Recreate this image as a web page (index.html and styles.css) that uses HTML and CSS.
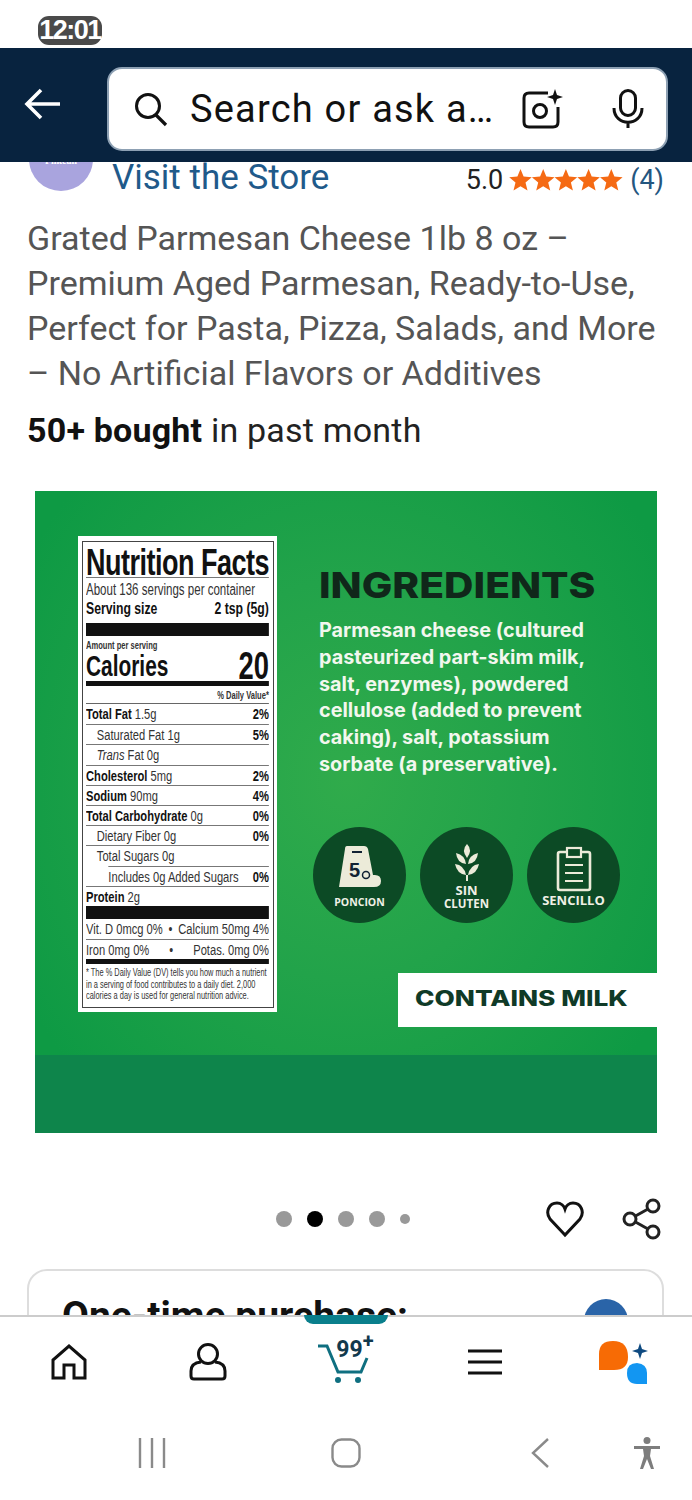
FILE: index.html
```html
<!DOCTYPE html>
<html lang="en">
<head>
    <meta charset="UTF-8">
    <meta name="viewport" content="width=device-width, initial-scale=1.0">
    <title>Grated Parmesan Cheese</title>
    <link rel="stylesheet" href="styles.css">
</head>
<body>
    <div class="status-bar"><span class="time-chip">12:01</span></div>

    <header class="search-header">
        <svg class="back-arrow" width="40" height="34" viewBox="0 0 40 34"><path d="M4 17H37M18 3L4 17L18 31" fill="none" stroke="#fff" stroke-width="3.6"/></svg>
        <div class="search-box">
            <svg class="search-icon" width="36" height="38" viewBox="0 0 36 38"><circle cx="15" cy="16" r="11.5" fill="none" stroke="#111" stroke-width="3"/><path d="M23 25L33 35" stroke="#111" stroke-width="3.2"/></svg>
            <span class="search-text">Search or ask a…</span>
            <svg class="lens-icon" width="42" height="40" viewBox="0 0 42 40"><path d="M26 4H7Q2 4 2 9V33Q2 38 7 38H31Q36 38 36 33V18" fill="none" stroke="#111" stroke-width="3"/><circle cx="18" cy="22" r="6.5" fill="none" stroke="#111" stroke-width="3"/><path d="M33 0L35 6L41 8L35 10L33 16L31 10L25 8L31 6Z" fill="#111"/></svg>
            <svg class="mic-icon" width="32" height="40" viewBox="0 0 32 40"><rect x="8.5" y="1.5" width="15" height="25" rx="7.5" fill="none" stroke="#111" stroke-width="3"/><path d="M2 19C2 38 30 38 30 19M16 32V39" fill="none" stroke="#111" stroke-width="3"/></svg>
        </div>
    </header>

    <main class="content">
        <div class="store-row">
            <div class="store-avatar"><span>Filkeali</span></div>
            <a class="store-link">Visit the Store</a>
            <div class="rating">
                <span class="rating-num">5.0</span>
                <svg width="114" height="22" viewBox="0 0 114 22" fill="#f56a14">
                    <path id="star" d="M11.5 0L14.6 7.6L22.8 8.2L16.5 13.5L18.5 21.5L11.5 17.2L4.5 21.5L6.5 13.5L0.2 8.2L8.4 7.6Z"/>
                    <use href="#star" x="22.7"/><use href="#star" x="45.4"/><use href="#star" x="68.1"/><use href="#star" x="90.8"/>
                </svg>
                <span class="rating-count">(4)</span>
            </div>
        </div>

        <h1 class="product-title">Grated Parmesan Cheese 1lb 8 oz –<br>Premium Aged Parmesan, Ready-to-Use,<br>Perfect for Pasta, Pizza, Salads, and More<br>– No Artificial Flavors or Additives</h1>
        <p class="bought"><b>50+ bought</b> in past month</p>

        <section class="product-image">
            <div class="image-top">
                <div class="nf-label">
                    <div class="nf-border">
                        <div class="nf-inner">
                            <div class="nf-title">Nutrition Facts</div>
                            <div class="nf-servings">About 136 servings per container</div>
                            <div class="nf-serving-size"><span>Serving size</span><span>2 tsp (5g)</span></div>
                            <div class="nf-bar nf-bar-thick"></div>
                            <div class="nf-amount">Amount per serving</div>
                            <div class="nf-calories"><span>Calories</span><span class="nf-cal-num">20</span></div>
                            <div class="nf-bar nf-bar-mid"></div>
                            <div class="nf-dv">% Daily Value*</div>
                            <div class="nf-row"><span><b>Total Fat</b> 1.5g</span><b>2%</b></div>
                            <div class="nf-row nf-indent"><span>Saturated Fat 1g</span><b>5%</b></div>
                            <div class="nf-row nf-indent"><span><i>Trans</i> Fat 0g</span></div>
                            <div class="nf-row"><span><b>Cholesterol</b> 5mg</span><b>2%</b></div>
                            <div class="nf-row"><span><b>Sodium</b> 90mg</span><b>4%</b></div>
                            <div class="nf-row"><span><b>Total Carbohydrate</b> 0g</span><b>0%</b></div>
                            <div class="nf-row nf-indent"><span>Dietary Fiber 0g</span><b>0%</b></div>
                            <div class="nf-row nf-indent"><span>Total Sugars 0g</span></div>
                            <div class="nf-row nf-indent-2"><span>Includes 0g Added Sugars</span><b>0%</b></div>
                            <div class="nf-row"><span><b>Protein</b> 2g</span></div>
                            <div class="nf-bar nf-bar-thick nf-bar-protein"></div>
                            <div class="nf-row nf-plain"><span>Vit. D 0mcg 0%</span><span>•</span><span>Calcium 50mg 4%</span></div>
                            <div class="nf-row"><span>Iron 0mg 0%</span><span class="nf-dot">•</span><span>Potas. 0mg 0%</span></div>
                            <div class="nf-bar nf-bar-mid"></div>
                            <div class="nf-foot">* The % Daily Value (DV) tells you how much a nutrient<br>in a serving of food contributes to a daily diet. 2,000<br>calories a day is used for general nutrition advice.</div>
                        </div>
                    </div>
                </div>

                <div class="image-right">
                    <h2 class="ingredients-title"><span>INGREDIENTS</span></h2>
                    <p class="ingredients-text">Parmesan cheese (cultured<br>pasteurized part-skim milk,<br>salt, enzymes), powdered<br>cellulose (added to prevent<br>caking), salt, potassium<br>sorbate (a preservative).</p>
                    <div class="badges">
                        <div class="badge">
                            <svg width="44" height="44" viewBox="0 0 44 44"><path d="M9 1H26Q29 1 30 4L35 30Q43 29 43 36Q43 42 36 42H1L7 4Q7 1 9 1Z" fill="#ecebd9"/><path d="M14 7H24" stroke="#123" stroke-width="2"/><text x="11" y="32" class="badge-five">5</text><circle cx="28" cy="30" r="3.5" fill="none" stroke="#123" stroke-width="1.5"/></svg>
                            <span class="badge-label badge-poncion">PONCION</span>
                        </div>
                        <div class="badge">
                            <svg width="26" height="38" viewBox="0 0 26 38" fill="#ecebd9"><path d="M13 0Q19 6 13 14Q7 6 13 0Z"/><path d="M2 9Q11 11 12 20Q3 19 2 9Z"/><path d="M24 9Q15 11 14 20Q23 19 24 9Z"/><path d="M1 20Q10 21 12 31Q3 30 1 20Z"/><path d="M25 20Q16 21 14 31Q23 30 25 20Z"/><path d="M12 31H14V37H12Z"/></svg>
                            <span class="badge-label badge-cluten"><span class="badge-sin">SIN</span><br>CLUTEN</span>
                        </div>
                        <div class="badge">
                            <svg width="36" height="46" viewBox="0 0 36 46"><rect x="2" y="6" width="32" height="38" rx="2" fill="none" stroke="#ecebd9" stroke-width="2.6"/><rect x="11" y="2" width="14" height="9" fill="#0c4a25" stroke="#ecebd9" stroke-width="2.2"/><path d="M9 19H27M9 27H27M9 35H27" stroke="#ecebd9" stroke-width="2"/></svg>
                            <span class="badge-label badge-sencillo">SENCILLO</span>
                        </div>
                    </div>
                    <div class="contains-milk"><span>CONTAINS MILK</span></div>
                </div>
            </div>
            <div class="image-band"></div>
        </section>

        <div class="carousel-row">
            <div class="dots">
                <span class="dot"></span><span class="dot dot-active"></span><span class="dot"></span><span class="dot"></span><span class="dot dot-small"></span>
            </div>
            <svg class="heart-icon" width="38" height="38" viewBox="0 0 38 38"><path d="M19 35L4 19C-1 12 3 3 11 3C15 3 18 6 19 9C20 6 23 3 27 3C35 3 39 12 34 19Z" fill="none" stroke="#111" stroke-width="3"/></svg>
            <svg class="share-icon" width="40" height="42" viewBox="0 0 40 42"><g fill="none" stroke="#222" stroke-width="3"><circle cx="31" cy="8" r="6"/><circle cx="8" cy="21" r="6"/><circle cx="31" cy="34" r="6"/><path d="M13.5 18L26 11M13.5 24L26 31"/></g></svg>
        </div>

        <div class="buy-card">
            <span class="buy-title">One-time purchase:</span>
            <span class="buy-radio"></span>
        </div>
    </main>

    <nav class="bottom-nav">
        <span class="cart-tab"></span>
        <div class="nav-icons">
            <svg width="36" height="36" viewBox="0 0 36 36"><path d="M2 34V16L18 2L34 16V34H23V21H13V34Z" fill="none" stroke="#111" stroke-width="3"/></svg>
            <svg width="38" height="38" viewBox="0 0 38 38"><circle cx="19" cy="11" r="9.5" fill="none" stroke="#111" stroke-width="3"/><path d="M12 19Q2 20 2 28V33Q2 36 5 36H33Q36 36 36 33V28Q36 20 26 19" fill="none" stroke="#111" stroke-width="3"/></svg>
            <div class="nav-cart">
                <svg width="58" height="44" viewBox="0 0 58 44"><path d="M1 6H10L21 32H44L50 18" fill="none" stroke="#0f6f80" stroke-width="3"/><circle cx="21" cy="40" r="3" fill="#0f6f80"/><circle cx="41" cy="40" r="3" fill="#0f6f80"/></svg>
                <span class="cart-count">99<sup>+</sup></span>
            </div>
            <svg width="36" height="28" viewBox="0 0 36 28"><path d="M1 3H35M1 14H35M1 25H35" stroke="#111" stroke-width="3"/></svg>
            <svg width="50" height="44" viewBox="0 0 50 44"><path d="M1 14Q1 1 15 1Q30 1 30 17Q30 30 16 30H1Z" fill="#f76b05"/><path d="M29 33Q29 23 39 23Q49 24 49 33V44H39Q29 44 29 33Z" fill="#1296f2"/><path d="M42 3L44 9L50 11L44 13L42 19L40 13L34 11L40 9Z" fill="#0e4a80"/></svg>
        </div>
        <div class="android-nav">
            <svg class="and-recent" width="28" height="30" viewBox="0 0 28 30"><path d="M2 0V30M14 0V30M26 0V30" stroke="#8a8a8a" stroke-width="2.4"/></svg>
            <svg class="and-home" width="30" height="30" viewBox="0 0 30 30"><rect x="1.5" y="1.5" width="27" height="27" rx="9" fill="none" stroke="#8a8a8a" stroke-width="2.4"/></svg>
            <svg class="and-back" width="20" height="30" viewBox="0 0 20 30"><path d="M18 1L3 15L18 29" fill="none" stroke="#8a8a8a" stroke-width="2.4"/></svg>
            <svg class="and-access" width="28" height="32" viewBox="0 0 28 32" fill="#7d7d7d"><circle cx="14" cy="3.5" r="3.5"/><path d="M1 9H27V12H18L17 19L21 32H18L14 22L10 32H7L11 19L10 12H1Z"/></svg>
        </div>
    </nav>
</body>
</html>
```

FILE: styles.css
```css
* {
    box-sizing: border-box;
}
html, body {
    margin: 0;
    padding: 0;
}
body {
    width: 692px;
    height: 1500px;
    overflow: hidden;
    background-color: #fff;
    display: flex;
    flex-direction: column;
    font-family: Roboto, sans-serif;
}

/* status bar */
.status-bar {
    height: 48px;
    flex: none;
    padding: 16px 0 0 38px;
}
.time-chip {
    display: block;
    width: 64px;
    height: 29px;
    border-radius: 11px;
    background-color: #4a4a4a;
    color: #fff;
    font: bold 27px/29px 'Liberation Sans', sans-serif;
    text-align: center;
    letter-spacing: -1.5px;
}

/* search header */
.search-header {
    height: 114px;
    flex: none;
    background-color: #08233f;
    display: flex;
    align-items: center;
    padding-left: 23px;
    gap: 45px;
    position: relative;
    z-index: 2;
}
.back-arrow {
    margin-right: -1px;
    margin-top: -2px;
}
.search-box {
    width: 561px;
    height: 84px;
    margin-top: 7px;
    background-color: #fff;
    border: 2px solid #8da0b3;
    border-radius: 15px;
    display: flex;
    align-items: center;
    padding-left: 24px;
}
.search-text {
    font-size: 38px;
    font-weight: 400;
    letter-spacing: 1.2px;
    color: #111;
    width: 332px;
    margin-left: 21px;
    white-space: nowrap;
}
.lens-icon {
    margin-right: 48px;
}

/* page content */
.content {
    height: 1153px;
    flex: none;
    overflow: hidden;
}
.store-row {
    height: 54px;
    display: flex;
    align-items: flex-start;
    padding-left: 29px;
}
.store-avatar {
    width: 64px;
    height: 64px;
    flex: none;
    margin-top: -35px;
    border-radius: 50%;
    background-color: #a9a4de;
    color: #fff;
    font: bold 10px 'Liberation Serif', serif;
    text-align: center;
    padding-top: 28px;
}
.store-link {
    margin-left: 19px;
    color: #1f5a8a;
    font-size: 35px;
    line-height: 32px;
    white-space: nowrap;
}
.rating {
    margin-left: auto;
    margin-right: 28px;
    display: flex;
    align-items: center;
    height: 36px;
    gap: 6px;
}
.rating-num {
    font-size: 27px;
    color: #222;
}
.rating-count {
    font-size: 27px;
    color: #24567f;
    margin-left: 1px;
}
.product-title {
    margin: 0;
    padding-left: 27px;
    font-size: 34px;
    line-height: 45px;
    font-weight: 400;
    color: #555;
    white-space: nowrap;
}
.bought {
    margin: 12px 0 0;
    padding-left: 27px;
    font-size: 34px;
    line-height: 45px;
    letter-spacing: .2px;
    color: #222;
}
.bought b {
    color: #111;
}

/* product picture */
.product-image {
    width: 622px;
    height: 642px;
    margin: 38px 0 0 35px;
    display: flex;
    flex-direction: column;
    background: radial-gradient(ellipse at 50% 45%, #30ab4b 0%, #22a34a 40%, #0e9a44 85%);
}
.image-top {
    height: 564px;
    display: flex;
    padding: 45px 0 0 43px;
}
.image-band {
    height: 78px;
    background-color: #0e854b;
}
.nf-label {
    width: 199px;
    height: 476px;
    flex: none;
    background-color: #fff;
    padding: 5px 3px 4px 4px;
}
.nf-border {
    height: 100%;
    border: 1px solid #444;
    overflow: hidden;
    padding: 0 3px;
}
.nf-inner {
    width: 254px;
    transform: scaleX(.72);
    transform-origin: left top;
    font-family: 'Liberation Sans', sans-serif;
    font-size: 15.5px;
    color: #333;
}
.nf-inner b {
    color: #111;
}
.nf-title {
    height: 36px;
    font-size: 37.5px;
    line-height: 40px;
    letter-spacing: -.7px;
    font-weight: bold;
    color: #111;
    white-space: nowrap;
    border-bottom: 1px solid #777;
}
.nf-servings {
    height: 21px;
    line-height: 24px;
    font-size: 16px;
    white-space: nowrap;
}
.nf-serving-size {
    display: flex;
    justify-content: space-between;
    height: 20px;
    line-height: 20px;
    font-size: 17px;
    font-weight: bold;
    color: #111;
}
.nf-bar {
    background-color: #111;
}
.nf-bar-thick {
    height: 13px;
    margin-top: 4px;
}
.nf-bar-mid {
    height: 5px;
}
.nf-amount {
    height: 13px;
    margin-top: 3px;
    font-size: 10.5px;
    line-height: 13px;
    font-weight: bold;
}
.nf-calories {
    display: flex;
    justify-content: space-between;
    align-items: center;
    height: 29px;
    font-size: 29px;
    font-weight: bold;
    color: #111;
}
.nf-cal-num {
    font-size: 38px;
}
.nf-dv {
    height: 18px;
    text-align: right;
    font-size: 10.5px;
    line-height: 19px;
    font-weight: bold;
    border-bottom: 1px solid #666;
}
.nf-row {
    display: flex;
    justify-content: space-between;
    height: 20.2px;
    line-height: 20px;
    border-top: 1px solid #777;
    white-space: nowrap;
}
.nf-dv + .nf-row {
    border-top: 0;
}
.nf-plain {
    border-top: 0;
}
.nf-indent span {
    padding-left: 15px;
}
.nf-indent-2 {
    margin-left: 31px;
}
.nf-bar-protein {
    margin-top: 0;
}
.nf-foot {
    margin-top: 3px;
    font-size: 10.3px;
    line-height: 11.5px;
    white-space: nowrap;
}

/* ingredients column */
.image-right {
    flex: 1;
    display: flex;
    flex-direction: column;
    margin-left: 42px;
}
.ingredients-title {
    margin: 29px 0 0;
    font-family: Inter, sans-serif;
    font-size: 36px;
    line-height: 40px;
    font-weight: 800;
    color: #10271a;
    white-space: nowrap;
}
.ingredients-title span {
    display: inline-block;
    transform: scaleX(1.13);
    transform-origin: left center;
}
.ingredients-text {
    margin: 12px 0 0;
    font-family: Inter, sans-serif;
    font-size: 19.8px;
    line-height: 26.8px;
    font-weight: 700;
    color: #f2f7ee;
    white-space: nowrap;
}
.badges {
    display: flex;
    gap: 14px;
    margin: 49px 0 0 -6px;
}
.badge {
    width: 93px;
    height: 96px;
    border-radius: 50%;
    background-color: #0c4a25;
    display: flex;
    flex-direction: column;
    align-items: center;
    justify-content: center;
    gap: 2px;
    padding-top: 4px;
}
.badge-label {
    font-family: 'Open Sans', sans-serif;
    font-size: 11.5px;
    line-height: 13px;
    font-weight: 700;
    color: #f0f0e6;
    text-align: center;
}
.badge-poncion {
    font-size: 10.5px;
    margin-top: 5px;
}
.badge-sin {
    font-size: 13px;
}
.badge-sencillo {
    font-size: 13px;
}
.badge-five {
    font: bold 20px 'Liberation Sans', sans-serif;
    fill: #123;
}
.contains-milk {
    margin: 50px 0 0 79px;
    height: 54px;
    background-color: #fff;
    color: #0f3a27;
    font-family: Inter, sans-serif;
    font-size: 21px;
    line-height: 52px;
    font-weight: 800;
    padding-left: 17px;
    white-space: nowrap;
}
.contains-milk span {
    display: inline-block;
    transform: scaleX(1.25);
    transform-origin: left center;
}

/* dots and actions */
.carousel-row {
    height: 50px;
    margin-top: 61px;
    display: flex;
    align-items: center;
    padding-left: 276px;
}
.dots {
    display: flex;
    align-items: center;
    gap: 15px;
}
.dot {
    width: 16px;
    height: 16px;
    border-radius: 50%;
    background-color: #999;
}
.dot-active {
    background-color: #000;
}
.dot-small {
    width: 10px;
    height: 10px;
}
.heart-icon {
    margin-left: 136px;
}
.share-icon {
    margin-left: 38px;
}
.buy-card {
    margin: 25px 28px 0 27px;
    height: 120px;
    border: 2px solid #ddd;
    border-radius: 20px;
    padding: 25px 0 0 33px;
    display: flex;
    justify-content: space-between;
}
.buy-title {
    font-size: 39px;
    font-weight: 700;
    color: #111;
    line-height: 40px;
}
.buy-radio {
    width: 44px;
    height: 44px;
    border-radius: 50%;
    background-color: #2a64a8;
    margin: 3px 34px 0 0;
}

/* bottom navigation */
.bottom-nav {
    position: relative;
    height: 185px;
    flex: none;
    background-color: #fff;
    border-top: 2px solid #ccc;
}
.cart-tab {
    position: absolute;
    left: 304px;
    top: -2px;
    width: 84px;
    height: 9px;
    background-color: #0a7f8c;
    border-radius: 0 0 10px 10px;
}
.nav-icons {
    height: 66px;
    margin-top: 12px;
    display: grid;
    grid-template-columns: repeat(5, 138.5px);
    justify-items: center;
    align-items: center;
}
.nav-cart {
    position: relative;
    width: 58px;
    height: 44px;
}
.cart-count {
    position: absolute;
    left: 19px;
    top: -3px;
    font-size: 23px;
    line-height: 26px;
    font-weight: 700;
    color: #12394d;
}
.cart-count sup {
    font-size: 20px;
    line-height: 0;
}
.android-nav {
    display: flex;
    align-items: center;
    height: 34px;
    margin-top: 41px;
    padding-left: 138px;
}
.and-home {
    margin-left: 165px;
}
.and-back {
    margin-left: 169px;
}
.and-access {
    margin-left: 83px;
}
```
